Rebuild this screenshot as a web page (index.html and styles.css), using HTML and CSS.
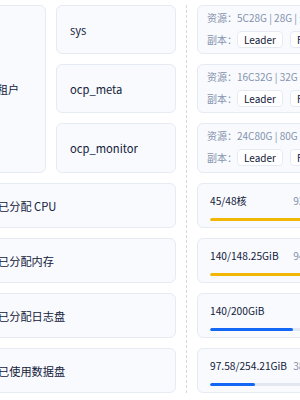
FILE: index.html
```html
<!DOCTYPE html>
<html lang="zh-CN">
<head>
<meta charset="utf-8">
<title>租户资源</title>
<link rel="stylesheet" href="styles.css">
</head>
<body>
<div class="board">
  <div class="left">
    <div class="tenant-group">
      <div class="card tenant">租户</div>
      <div class="names">
        <div class="card name h49">sys</div>
        <div class="card name h49">ocp_meta</div>
        <div class="card name h50">ocp_monitor</div>
      </div>
    </div>
    <div class="card label">已分配 CPU</div>
    <div class="card label">已分配内存</div>
    <div class="card label">已分配日志盘</div>
    <div class="card label">已使用数据盘</div>
  </div>
  <div class="divider"></div>
  <div class="right">
    <div class="card res h49">
      <div class="res-line">资源：5C28G | 28G | 无限制</div>
      <div class="res-tags"><span class="res-key">副本：</span><span class="tag">Leader</span><span class="tag">Follower</span></div>
    </div>
    <div class="card res h49">
      <div class="res-line">资源：16C32G | 32G | 无限制</div>
      <div class="res-tags"><span class="res-key">副本：</span><span class="tag">Leader</span><span class="tag">Follower</span></div>
    </div>
    <div class="card res h50">
      <div class="res-line">资源：24C80G | 80G | 无限制</div>
      <div class="res-tags"><span class="res-key">副本：</span><span class="tag">Leader</span><span class="tag">Follower</span></div>
    </div>
    <div class="card usage">
      <div class="usage-head"><span class="usage-val">45/48核</span><span class="usage-pct">93.75%</span></div>
      <div class="track"><div class="fill warn" style="width:93.75%"></div></div>
    </div>
    <div class="card usage">
      <div class="usage-head"><span class="usage-val">140/148.25GiB</span><span class="usage-pct">94.43%</span></div>
      <div class="track"><div class="fill warn" style="width:94.43%"></div></div>
    </div>
    <div class="card usage">
      <div class="usage-head"><span class="usage-val">140/200GiB</span><span class="usage-pct">70%</span></div>
      <div class="track"><div class="fill ok" style="width:70%"></div></div>
    </div>
    <div class="card usage">
      <div class="usage-head"><span class="usage-val">97.58/254.21GiB</span><span class="usage-pct">38.39%</span></div>
      <div class="track"><div class="fill ok" style="width:38.39%"></div></div>
    </div>
  </div>
</div>
</body>
</html>
```

FILE: styles.css
```css
html, body {
  margin: 0;
  padding: 0;
  background: #ffffff;
  overflow: hidden;
}
body {
  font-family: "Noto Sans CJK SC", "Noto Sans", sans-serif;
  color: #132039;
}
.board {
  display: flex;
  margin-left: -20px;
  padding-top: 5px;
  width: max-content;
}
.left {
  display: flex;
  flex-direction: column;
  gap: 10px;
  width: 196px;
}
.tenant-group {
  display: flex;
  gap: 10px;
}
.names {
  display: flex;
  flex-direction: column;
  gap: 10px;
  width: 120px;
}
.card {
  box-sizing: border-box;
  background: #f8fafe;
  border: 1px solid #e6ebf3;
  border-radius: 6px;
}
.tenant {
  width: 66px;
  display: flex;
  align-items: center;
  padding-left: 16px;
  font-size: 11px;
}
.name {
  display: flex;
  align-items: center;
  padding-left: 13px;
  font-size: 11.2px;
}
.h49 { height: 49px; }
.h50 { height: 50px; }
.label {
  height: 45px;
  display: flex;
  align-items: center;
  padding-left: 17px;
  font-size: 11.2px;
}
.divider {
  width: 0;
  border-left: 1px dashed #d3d9e3;
  margin: 0 10px;
}
.right {
  display: flex;
  flex-direction: column;
  gap: 10px;
  width: 144px;
}
.res {
  padding: 5px 9px;
  font-size: 10px;
  color: #8592ad;
  white-space: nowrap;
  overflow: hidden;
}
.res-line {
  height: 13px;
  line-height: 13px;
}
.res-tags {
  display: flex;
  align-items: center;
  margin-top: 7px;
  gap: 7px;
}
.res-key {
  margin-right: -7px;
  width: 30px;
}
.tag {
  box-sizing: border-box;
  height: 17px;
  line-height: 15px;
  padding: 0 6px;
  font-size: 10px;
  color: #132039;
  background: #ffffff;
  border: 1px solid #e6ebf3;
  border-radius: 4px;
}
.usage {
  height: 45px;
  padding: 9px 12px 6px;
}
.usage-head {
  display: flex;
  justify-content: space-between;
  height: 15px;
  line-height: 15px;
  font-size: 10.2px;
  white-space: nowrap;
}
.usage-pct {
  color: #8592ad;
}
.track {
  margin-top: 10px;
  height: 3px;
  border-radius: 2px;
  background: #e3e8f0;
  overflow: hidden;
}
.fill {
  height: 100%;
  border-radius: 2px;
}
.warn { background: #f2b705; }
.ok { background: #1467f5; }
```
